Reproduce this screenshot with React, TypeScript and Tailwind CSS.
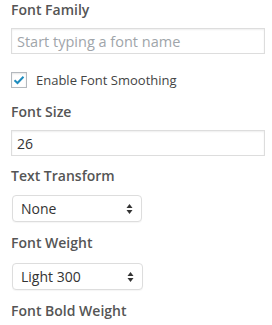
import React from "react";

function Heading({ children, className = "" }: { children: React.ReactNode; className?: string }) {
  return (
    <div className={`text-[14px] leading-[20px] font-semibold text-[#555] ${className}`}>
      {children}
    </div>
  );
}

function FakeSelect({ value, width, className = "" }: { value: string; width: string; className?: string }) {
  return (
    <div
      className={`flex h-[27px] items-center justify-between rounded-[4px] border border-[#ddd] bg-white pr-[8px] pl-[8px] text-[14px] text-[#333] shadow-[0_1px_1px_rgba(0,0,0,0.04)] ${width} ${className}`}
    >
      <span>{value}</span>
      <svg width="7" height="12" viewBox="0 0 7 12" className="text-[#333]">
        <path d="M3.5 1 L6.5 5 H0.5 Z" fill="currentColor" />
        <path d="M3.5 11 L6.5 7 H0.5 Z" fill="currentColor" />
      </svg>
    </div>
  );
}

export default function App() {
  return (
    <div className="h-[325px] w-[272px] overflow-hidden bg-white pl-[11px] font-['Open_Sans','Liberation_Sans',sans-serif]">
      <Heading>Font Family</Heading>
      <input
        readOnly
        placeholder="Start typing a font name"
        className="mt-[8px] block h-[26px] w-[254px] border border-[#ddd] bg-white px-[5px] text-[14.5px] text-[#333] shadow-[inset_0_1px_2px_rgba(0,0,0,0.07)] outline-none placeholder:text-[#a0a5aa]"
      />

      <div className="mt-[16px] flex items-center">
        <div className="flex h-[16px] w-[16px] items-center justify-center border border-[#b4b9be] bg-white shadow-[inset_0_1px_2px_rgba(0,0,0,0.1)]">
          <svg width="12" height="10" viewBox="0 0 12 10">
            <path d="M1.5 5.2 L4.5 8 L10.5 1.8" fill="none" stroke="#1e8cbe" strokeWidth="2" />
          </svg>
        </div>
        <span className="ml-[9px] text-[13px] leading-[20px] text-[#444]">Enable Font Smoothing</span>
      </div>

      <Heading className="mt-[12px]">Font Size</Heading>
      <input
        readOnly
        value="26"
        className="mt-[8px] block h-[26px] w-[254px] border border-[#ddd] bg-white px-[5px] text-[14px] text-[#333] shadow-[inset_0_1px_2px_rgba(0,0,0,0.07)] outline-none"
      />

      <Heading className="mt-[10px]">Text Transform</Heading>
      <FakeSelect value="None" width="w-[130px]" className="mt-[9px] ml-[1px]" />

      <Heading className="mt-[11px]">Font Weight</Heading>
      <FakeSelect value="Light 300" width="w-[131px]" className="mt-[10px] ml-[1px]" />

      <Heading className="mt-[11px]">Font Bold Weight</Heading>
    </div>
  );
}
